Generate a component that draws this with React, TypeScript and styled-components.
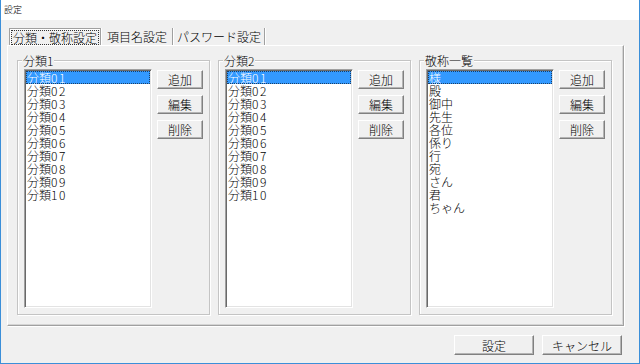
import React from "react";
import styled, { createGlobalStyle, css } from "styled-components";

const Global = createGlobalStyle`
  html, body { margin: 0; padding: 0; background: #fff; }
  * { box-sizing: border-box; }
  body { font-family: "Noto Sans CJK JP", "Noto Sans", sans-serif; }
`;

const Window = styled.div`
  width: 640px;
  height: 364px;
  display: flex;
  flex-direction: column;
  background: #f0f0f0;
  border-left: 1px solid #3b8fd9;
  border-right: 1px solid #3b8fd9;
  border-bottom: 1px solid #3b8fd9;
  font-family: "Noto Sans CJK JP", "Noto Sans", sans-serif;
  font-weight: 300;
  color: #000;
`;

const TitleBar = styled.div`
  height: 20px;
  background: #fff;
  display: flex;
  align-items: center;
  padding-left: 3px;
  font-size: 9px;
  line-height: 10px;
`;

const Body = styled.div`
  flex: 1;
  display: flex;
  flex-direction: column;
  padding: 8px 15px 0 6px;
`;

const TabStrip = styled.div`
  display: flex;
  height: 17px;
  margin-left: 2px;
`;

const Tab = styled.div<{ $w: number; $selected?: boolean }>`
  width: ${(p) => p.$w}px;
  height: 17px;
  display: flex;
  align-items: center;
  justify-content: center;
  font-size: 12px;
  line-height: 13px;
  white-space: nowrap;
  border-right: 1px solid #a0a0a0;
  box-shadow: 1px 0 0 #fff;
  margin-right: 1px;
  ${(p) =>
    p.$selected &&
    css`
      border-left: 1px solid #a0a0a0;
      border-top: 1px solid #a0a0a0;
      box-shadow: inset 1px 1px 0 #fff, 1px 0 0 #fff;
    `}
`;

const FocusText = styled.span`
  outline: 1px dotted #333;
  outline-offset: 0px;
  padding: 0 1px;
  line-height: 13px;
`;

const Panel = styled.div`
  height: 281px;
  border-top: 1px solid #fff;
  border-left: 1px solid #fff;
  border-right: 1px solid #a0a0a0;
  border-bottom: 1px solid #a0a0a0;
  box-shadow: 1px 1px 0 #fff, inset -1px -1px 0 #d4d4d4;
  display: flex;
  gap: 8px;
  padding: 8px 0 10px 9px;
`;

const Group = styled.fieldset`
  margin: 0;
  min-width: 0;
  width: 193px;
  height: 261px;
  border: 1px solid #c4c4c4;
  box-shadow: 1px 1px 0 #fff, inset 1px 1px 0 #fff;
  padding: 2px 5px 6px 6px;
  display: flex;
  gap: 5px;
  align-items: flex-start;
`;

const Legend = styled.legend`
  font-size: 12px;
  line-height: 13px;
  padding: 0 1px;
  margin-left: -2px;
  background: #f0f0f0;
`;

const ListBox = styled.div`
  width: 128px;
  height: 239px;
  background: #fff;
  border-top: 1px solid #a0a0a0;
  border-left: 1px solid #a0a0a0;
  border-right: 1px solid #fff;
  border-bottom: 1px solid #fff;
  box-shadow: inset 1px 1px 0 #696969, inset -1px -1px 0 #e3e3e3;
  padding: 1px;
  display: flex;
  flex-direction: column;
`;

const Item = styled.div<{ $selected?: boolean }>`
  height: 13px;
  line-height: 13px;
  font-size: 12px;
  padding-left: 1px;
  white-space: nowrap;
  ${(p) =>
    p.$selected &&
    css`
      background: #3399ff;
      color: #fff;
      outline: 1px dotted #1a3f66;
      outline-offset: -1px;
    `}
`;

const Num = styled.span`
  letter-spacing: 1.5px;
`;

const ButtonCol = styled.div`
  display: flex;
  flex-direction: column;
  gap: 6px;
  margin-top: 1px;
`;

const Button = styled.button<{ $w: number; $h: number }>`
  width: ${(p) => p.$w}px;
  height: ${(p) => p.$h}px;
  padding: 0;
  margin: 0;
  font-family: "Noto Sans CJK JP", "Noto Sans", sans-serif;
  font-weight: 300;
  font-size: 12px;
  line-height: 13px;
  color: #000;
  background: #f0f0f0;
  border-style: solid;
  border-width: 1px;
  border-color: #fff #808080 #808080 #fff;
  box-shadow: inset -1px -1px 0 #b4b4b4;
  display: flex;
  align-items: center;
  justify-content: center;
`;

const Footer = styled.div`
  display: flex;
  justify-content: flex-end;
  gap: 8px;
  margin-top: 9px;
  padding-right: 2px;
`;

type Entry = { label: string; num?: string };

const cats: Entry[] = Array.from({ length: 10 }, (_, i) => ({
  label: "分類",
  num: String(i + 1).padStart(2, "0"),
}));
const honorifics: Entry[] = ["様", "殿", "御中", "先生", "各位", "係り", "行", "宛", "さん", "君", "ちゃん"].map(
  (label) => ({ label })
);

function GroupBox({ title, items }: { title: string; items: Entry[] }) {
  return (
    <Group>
      <Legend>{title}</Legend>
      <ListBox>
        {items.map((it, i) => (
          <Item key={it.label + (it.num ?? "")} $selected={i === 0}>
            {it.label}
            {it.num && <Num>{it.num}</Num>}
          </Item>
        ))}
      </ListBox>
      <ButtonCol>
        <Button $w={46} $h={19}>追加</Button>
        <Button $w={46} $h={19}>編集</Button>
        <Button $w={46} $h={19}>削除</Button>
      </ButtonCol>
    </Group>
  );
}

export default function App() {
  return (
    <>
      <Global />
      <Window>
        <TitleBar>設定</TitleBar>
        <Body>
          <TabStrip>
            <Tab $w={92} $selected>
              <FocusText>分類・敬称設定</FocusText>
            </Tab>
            <Tab $w={71}>項目名設定</Tab>
            <Tab $w={91}>パスワード設定</Tab>
          </TabStrip>
          <Panel>
            <GroupBox title="分類1" items={cats} />
            <GroupBox title="分類2" items={cats} />
            <GroupBox title="敬称一覧" items={honorifics} />
          </Panel>
          <Footer>
            <Button $w={80} $h={20}>設定</Button>
            <Button $w={80} $h={20}>キャンセル</Button>
          </Footer>
        </Body>
      </Window>
    </>
  );
}
